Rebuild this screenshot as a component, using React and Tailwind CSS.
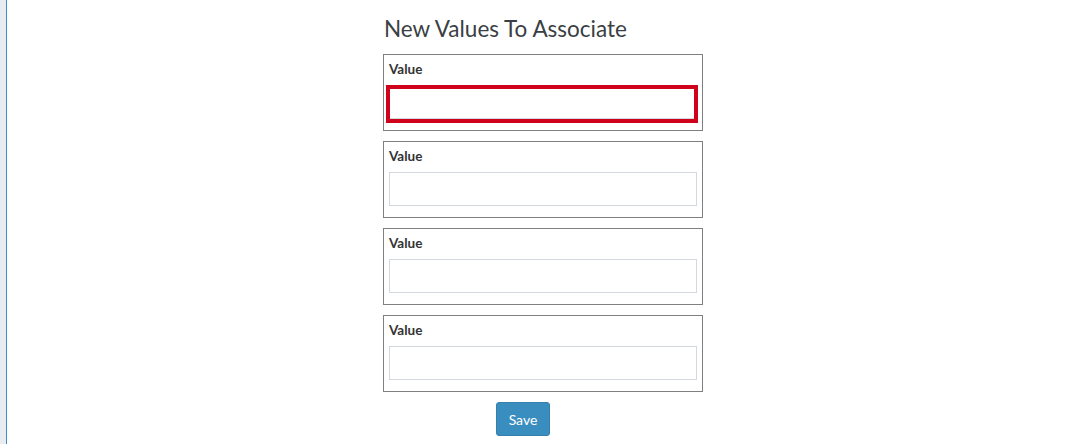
import React from 'react';

const font = { fontFamily: 'Lato, "Open Sans", sans-serif' };

function ValueCard({ invalid }) {
  return (
    <div className="border border-[#7f7f7f] bg-white pt-[5px] pb-[11px] px-[5px]">
      <div className="text-[13.5px] leading-[18px] font-bold text-[#333333] mb-[7px]">Value</div>
      <div className="relative">
        <input
          type="text"
          className="block w-full h-[34px] border border-[#d3d7de] bg-white outline-none"
        />
        {invalid && (
          <span className="pointer-events-none absolute -left-[3px] top-0 w-[312px] h-[38px] border-4 border-[#d0021b]" />
        )}
      </div>
    </div>
  );
}

export default function App() {
  return (
    <div className="h-screen bg-white flex overflow-hidden" style={font}>
      {/* left rail */}
      <div className="w-[6px] bg-[#e9edf2]" />
      <div className="w-px bg-[#3b8fc9]" />

      <main className="flex-1">
        <div className="ml-[376px] w-[320px] pt-[13px]">
          <h2 className="text-[22.5px] leading-[32px] text-[#3a3f44] mb-[9px] pl-px">New Values To Associate</h2>
          <div className="flex flex-col gap-[10px]">
            <ValueCard invalid />
            <ValueCard />
            <ValueCard />
            <ValueCard />
          </div>
          <button className="mt-[10px] ml-[113px] w-[54px] h-[34px] rounded-[3px] bg-[#3a8dbf] border border-[#357fac] text-white text-[14px]">
            Save
          </button>
        </div>
      </main>
    </div>
  );
}
